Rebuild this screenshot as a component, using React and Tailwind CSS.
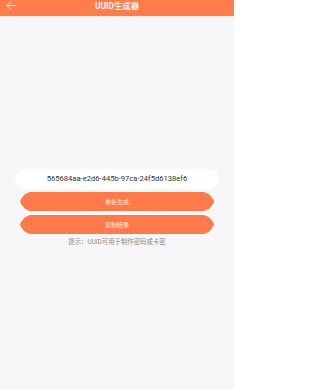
import React from "react";

const clip =
  "[clip-path:polygon(0_50%,1px_38%,2.5px_26%,4.5px_15%,7px_6%,10px_0,calc(100%-10px)_0,calc(100%-7px)_6%,calc(100%-4.5px)_15%,calc(100%-2.5px)_26%,calc(100%-1px)_38%,100%_50%,calc(100%-1px)_62%,calc(100%-2.5px)_74%,calc(100%-4.5px)_85%,calc(100%-7px)_94%,calc(100%-10px)_100%,10px_100%,7px_94%,4.5px_85%,2.5px_74%,1px_62%)]";

const btn =
  "h-[19px] w-full bg-[#ff7a4b] text-[#ffeae2] text-[6px] font-['Noto_Sans_CJK_SC',sans-serif] flex items-center justify-center";

export default function App() {
  return (
    <div className="w-[234px] h-[389px] bg-[#f7f7f9] flex flex-col overflow-hidden font-['Roboto','Noto_Sans_CJK_SC',sans-serif]">
      <div className="relative h-[17px] bg-[#ff7c4c] flex justify-center border-b border-[#ffe9e0]">
        <svg
          className="absolute left-[6px] top-[1px]"
          width="10"
          height="9"
          viewBox="0 0 10 9"
          fill="none"
          stroke="#fff2ec"
          strokeWidth="1"
          strokeLinecap="round"
          strokeLinejoin="round"
        >
          <path d="M4.5 1 L1 4.5 L4.5 8 M1 4.5 H9.5" />
        </svg>
        <span className="text-[8.4px] leading-[12px] font-bold text-[#fff1ea]">
          UUID生成器
        </span>
      </div>

      <div className="mt-[152px] mx-[15px] h-[20px] rounded-full bg-white flex items-center justify-center">
        <span className="text-[7.6px] text-[#333333]">
          565684aa-e2d6-445b-97ca-24f5d6138ef6
        </span>
      </div>

      <div className="mt-[3px] mx-[20px] flex flex-col gap-[4px]">
        <button className={`${btn} ${clip}`}>重新生成</button>
        <button className={`${btn} ${clip}`}>复制结果</button>
      </div>

      <div className="mt-[3px] text-center text-[6.4px] leading-[10px] text-[#8a8a8a]">
        提示：UUID可用于制作密码或卡密
      </div>
    </div>
  );
}
